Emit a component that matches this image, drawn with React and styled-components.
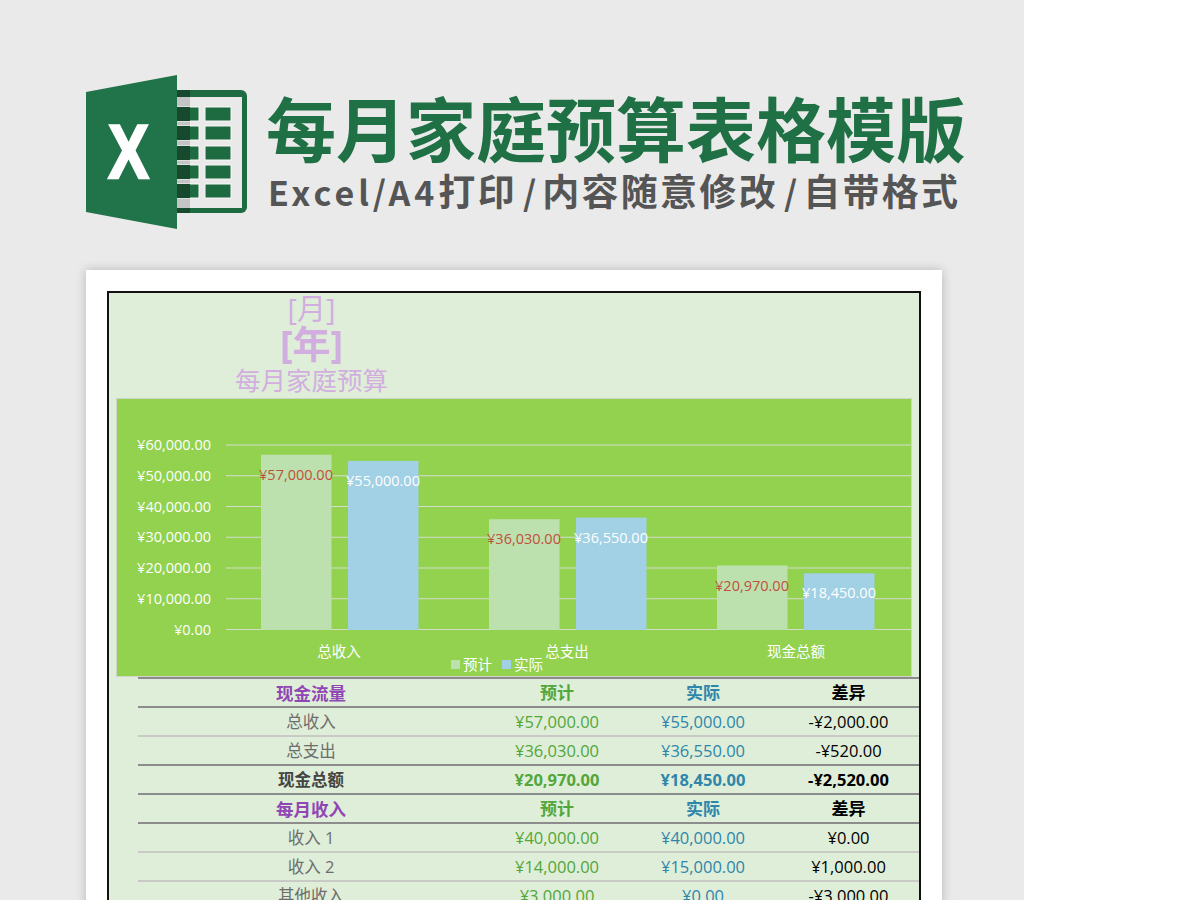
import React from 'react';
import styled, { createGlobalStyle } from 'styled-components';

const GlobalStyle = createGlobalStyle`
  html, body {
    margin: 0;
    padding: 0;
    background: #fff;
    overflow: hidden;
  }
`;

const Page = styled.div`
  width: 1024px;
  height: 900px;
  overflow: hidden;
  background: #eaeaea;
  font-family: "Open Sans", "Noto Sans CJK SC", sans-serif;
`;

const Banner = styled.header`
  display: flex;
  align-items: flex-start;
  gap: 19px;
  height: 195px;
  padding: 75px 0 0 86px;
`;

const Heading = styled.div`
  display: flex;
  flex-direction: column;
  padding-top: 11px;
`;

const Title = styled.h1`
  margin: 0;
  font-family: "Noto Sans CJK SC", sans-serif;
  font-size: 70px;
  line-height: 82px;
  font-weight: 700;
  color: #1f7145;
  white-space: nowrap;
`;

const Subtitle = styled.p`
  margin: 0;
  font-family: "Noto Sans CJK SC", sans-serif;
  font-size: 37px;
  line-height: 44px;
  font-weight: 700;
  letter-spacing: 2.3px;
  padding-left: 2px;
  color: #555;
  white-space: nowrap;
`;

const Latin = styled.span`
  font-size: 34px;
  letter-spacing: 4px;
`;

const Slash = styled.span`
  font-size: 34px;
  letter-spacing: 0;
  padding: 0 6px;
`;

const Card = styled.main`
  width: 856px;
  margin-left: 86px;
  padding: 21px 21px 0;
  box-sizing: border-box;
  background: #fff;
  box-shadow: 0 0 10px rgba(0, 0, 0, 0.22);
  height: 700px;
`;

const Sheet = styled.section`
  width: 814px;
  height: 700px;
  box-sizing: border-box;
  border: 2px solid #111;
  background: #dfeed8;
`;

const SheetTitle = styled.div`
  display: flex;
  flex-direction: column;
  align-items: center;
  width: 405px;
  height: 105px;
  color: #d2aee0;
`;

const TitleMonth = styled.div`
  font-size: 29px;
  line-height: 31px;
`;

const TitleYear = styled.div`
  font-size: 38px;
  line-height: 38px;
  margin-bottom: 3px;
  font-weight: 700;
`;

const TitleName = styled.div`
  font-size: 25.5px;
  line-height: 30px;
`;

const ChartBox = styled.div`
  width: 796px;
  height: 279px;
  margin-left: 7px;
  box-sizing: border-box;
  border: 1px solid #cfd3c8;
  background: #92d24e;

  svg {
    display: block;
  }

  text {
    font-family: "Open Sans", "Noto Sans CJK SC", sans-serif;
    font-size: 14.5px;
  }
`;

const Table = styled.div`
  margin: 0 0 0 29px;
  width: 781px;
`;

const Row = styled.div`
  display: grid;
  grid-template-columns: 346px 146px 146px 143px;
  height: 29px;
  padding-top: 1px;
  box-sizing: border-box;
  border-top: 2px solid ${p => (p.$heavy ? '#8c8c8c' : '#c9cac6')};
  align-items: center;
  text-align: center;
  font-size: ${p => (p.$head ? '17px' : '16.5px')};
  line-height: 26px;
  font-weight: ${p => (p.$bold ? 700 : 400)};
`;

const Label = styled.div`
  color: ${p => (p.$head ? '#9146b5' : p.$bold ? '#444' : '#6d6d6d')};
  font-size: ${p => (p.$head ? '17.5px' : 'inherit')};
`;

const Planned = styled.div`
  color: #52a63a;
`;

const Actual = styled.div`
  color: #2e86ab;
`;

const Diff = styled.div`
  color: #000;
  padding-left: 2px;
`;

const rows = [
  { head: true, label: '现金流量', a: '预计', b: '实际', c: '差异' },
  { label: '总收入', a: '¥57,000.00', b: '¥55,000.00', c: '-¥2,000.00', heavy: true },
  { label: '总支出', a: '¥36,030.00', b: '¥36,550.00', c: '-¥520.00' },
  { bold: true, label: '现金总额', a: '¥20,970.00', b: '¥18,450.00', c: '-¥2,520.00' },
  { head: true, label: '每月收入', a: '预计', b: '实际', c: '差异' },
  { label: '收入 1', a: '¥40,000.00', b: '¥40,000.00', c: '¥0.00', heavy: true },
  { label: '收入 2', a: '¥14,000.00', b: '¥15,000.00', c: '¥1,000.00' },
  { label: '其他收入', a: '¥3,000.00', b: '¥0.00', c: '-¥3,000.00' },
];

const ExcelLogo = () => (
  <svg width="161" height="154" viewBox="86 75 161 154">
    <rect x="170" y="90" width="77" height="123" rx="6" fill="#1f6b41" />
    <rect x="177" y="97" width="65" height="111" fill="#e9e9e9" />
    <rect x="177" y="97" width="13" height="111" fill="#c4c4c4" />
    {[107, 126, 146, 165, 184].map(y => (
      <g key={y}>
        <rect x="177" y={y} width="22" height="14" fill="#1f6b41" stroke="#f7f7f7" strokeWidth="1" />
        <rect x="177" y={y} width="13" height="14" fill="#17492e" />
        <rect x="205" y={y} width="26" height="14" fill="#1f6b41" stroke="#f7f7f7" strokeWidth="1" />
      </g>
    ))}
    <rect x="177" y="90" width="13" height="7" fill="#17492e" />
    <rect x="177" y="208" width="13" height="5" fill="#17492e" />
    <polygon points="86,92 177,75 177,229 86,212" fill="#21734a" />
    <text
      x="0"
      y="0"
      transform="translate(128.5 178) scale(0.8 1)"
      textAnchor="middle"
      fontFamily="Liberation Sans, sans-serif"
      fontWeight="700"
      fontSize="76"
      fill="#fff"
      stroke="#fff"
      strokeWidth="2.5"
    >
      X
    </text>
  </svg>
);

const axis = ['¥60,000.00', '¥50,000.00', '¥40,000.00', '¥30,000.00', '¥20,000.00', '¥10,000.00', '¥0.00'];
const groups = [
  { name: '总收入', x: 145, center: 223, plan: 57000, actual: 55000, planText: '¥57,000.00', actualText: '¥55,000.00' },
  { name: '总支出', x: 373, center: 451, plan: 36030, actual: 36550, planText: '¥36,030.00', actualText: '¥36,550.00' },
  { name: '现金总额', x: 601, center: 680, plan: 20970, actual: 18450, planText: '¥20,970.00', actualText: '¥18,450.00' },
];

const Chart = () => {
  const base = 231;
  const h = v => (v / 60000) * 184.5;
  return (
    <svg width="794" height="277" viewBox="1 1 794 277">
      {axis.map((t, i) => {
        const y = 47 + i * 30.75;
        return (
          <g key={t}>
            <line x1="110" x2="796" y1={y} y2={y} stroke="#d6dcd0" strokeWidth="1.2" />
            <text x="95" y={y + 5} textAnchor="end" fill="#fff">{t}</text>
          </g>
        );
      })}
      {groups.map(g => (
        <g key={g.name}>
          <rect x={g.x} y={base + 1 - h(g.plan)} width="70.5" height={h(g.plan)} fill="#bde0af" />
          <rect x={g.x + 87} y={base + 1 - h(g.actual)} width="70.5" height={h(g.actual)} fill="#a2d0e4" />
          <text x={g.x + 35} y={base - h(g.plan) + 26} textAnchor="middle" fill="#c0503c">{g.planText}</text>
          <text x={g.x + 122} y={base - h(g.actual) + 26} textAnchor="middle" fill="#fff">{g.actualText}</text>
          <text x={g.center} y="259" textAnchor="middle" fill="#fff">{g.name}</text>
        </g>
      ))}
      <rect x="335" y="262" width="9" height="9" fill="#bde0af" />
      <text x="347" y="272" fill="#fff">预计</text>
      <rect x="386" y="262" width="9" height="9" fill="#a2d0e4" />
      <text x="398" y="272" fill="#fff">实际</text>
    </svg>
  );
};

export default function App() {
  return (
    <Page>
      <GlobalStyle />
      <Banner>
        <ExcelLogo />
        <Heading>
          <Title>每月家庭预算表格模版</Title>
          <Subtitle>
            <Latin>Excel/A4</Latin>打印<Slash>/</Slash>内容随意修改<Slash>/</Slash>自带格式
          </Subtitle>
        </Heading>
      </Banner>
      <Card>
        <Sheet>
          <SheetTitle>
            <TitleMonth>[月]</TitleMonth>
            <TitleYear>[年]</TitleYear>
            <TitleName>每月家庭预算</TitleName>
          </SheetTitle>
          <ChartBox>
            <Chart />
          </ChartBox>
          <Table>
            {rows.map(r => (
              <Row key={r.label} $head={r.head} $heavy={r.head || r.heavy || r.bold} $bold={r.head || r.bold}>
                <Label $head={r.head} $bold={r.bold}>{r.label}</Label>
                <Planned>{r.a}</Planned>
                <Actual>{r.b}</Actual>
                <Diff>{r.c}</Diff>
              </Row>
            ))}
          </Table>
        </Sheet>
      </Card>
    </Page>
  );
}
